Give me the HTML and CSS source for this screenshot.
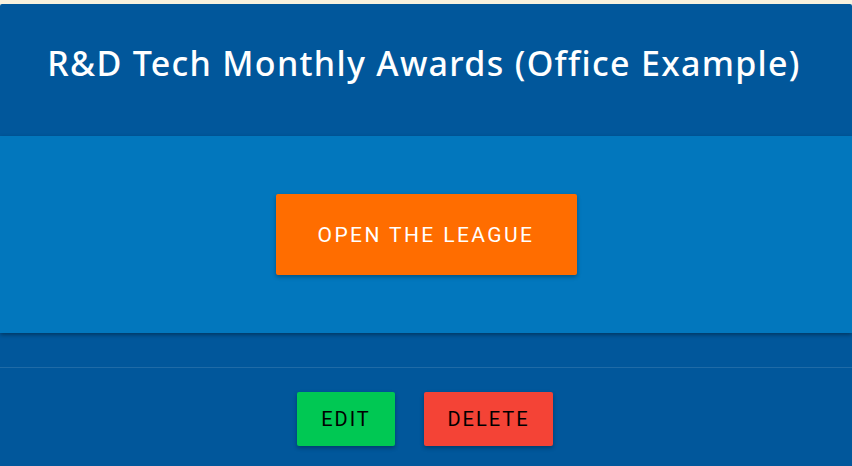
FILE: index.html
```html
<!DOCTYPE html>
<html>
<head>
<meta charset="utf-8">
<link rel="stylesheet" href="styles.css">
</head>
<body>
<div class="card">
  <header class="card-header">
    <h1 class="title">R&amp;D Tech Monthly Awards (Office Example)</h1>
  </header>
  <section class="card-body">
    <button class="btn btn-open">OPEN THE LEAGUE</button>
  </section>
  <div class="spacer"></div>
  <footer class="card-actions">
    <button class="btn btn-small btn-edit">EDIT</button>
    <button class="btn btn-small btn-delete">DELETE</button>
  </footer>
</div>
</body>
</html>
```
FILE: styles.css
```css
html, body {
  margin: 0;
  padding: 0;
  background: #f8f1de;
  height: 100%;
  overflow: hidden;
}
body {
  padding-top: 4px;
  font-family: Roboto, "Liberation Sans", sans-serif;
}
.card {
  background: #01579b;
  border-radius: 2px;
  min-height: 470px;
}
.card-header {
  height: 132px;
  display: flex;
  align-items: center;
  justify-content: center;
  padding-bottom: 14px;
  padding-right: 4px;
  box-sizing: border-box;
}
.title {
  margin: 0;
  color: #fff;
  font-family: "Noto Sans", "Open Sans", sans-serif;
  font-weight: 500;
  font-size: 34px;
  letter-spacing: 1.3px;
}
.card-body {
  background: #0277bd;
  height: 197px;
  display: flex;
  align-items: center;
  justify-content: center;
  box-shadow: 0 2px 4px rgba(0,0,0,0.35);
  position: relative;
}
.spacer {
  height: 34px;
  border-bottom: 1px solid rgba(255,255,255,0.12);
}
.card-actions {
  display: flex;
  justify-content: center;
  gap: 29px;
  padding-top: 24px;
  padding-right: 2px;
}
.btn {
  border: none;
  border-radius: 2px;
  font-family: Roboto, "Liberation Sans", sans-serif;
  cursor: pointer;
  box-shadow: 0 2px 4px rgba(0,0,0,0.3);
}
.btn-open {
  width: 301px;
  height: 81px;
  background: #ff6d00;
  color: #fff;
  font-size: 21px;
  letter-spacing: 2.4px;
}
.btn-small {
  height: 54px;
  color: #000;
  font-size: 20px;
  letter-spacing: 2px;
}
.btn-edit {
  width: 98px;
  background: #00c853;
}
.btn-delete {
  width: 129px;
  background: #f44336;
}
```
